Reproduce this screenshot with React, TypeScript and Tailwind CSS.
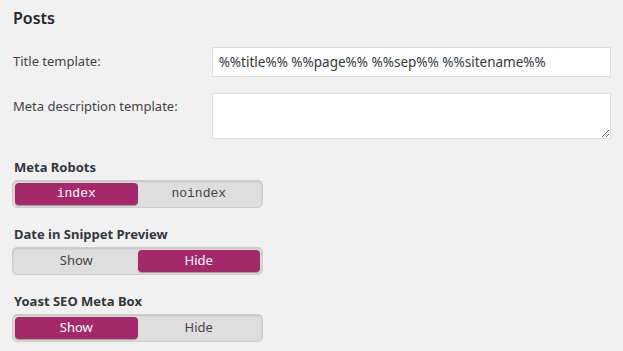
import { useState } from "react";

interface ToggleProps {
  options: string[];
  active: number;
  mono?: boolean;
}

const Toggle = ({ options, active, mono }: ToggleProps) => {
  const [sel, setSel] = useState(active);
  return (
    <div className="flex w-[251px] h-[28px] p-[2px] rounded-[5px] bg-[#dedede] border border-[#cdcdcd] shadow-[inset_0_1px_2px_rgba(0,0,0,0.12)]">
      {options.map((opt, i) => (
        <button
          key={opt}
          onClick={() => setSel(i)}
          className={
            "flex-1 h-full flex items-center justify-center rounded-[4px] text-[13px] " +
            (mono ? "font-['Liberation_Mono',monospace] " : "") +
            (sel === i
              ? "bg-[#a4286a] text-white shadow-[0_1px_1px_rgba(0,0,0,0.3)]"
              : "text-[#444]")
          }
        >
          {opt}
        </button>
      ))}
    </div>
  );
};

const App = () => {
  return (
    <div className="w-[623px] h-[351px] bg-[#f1f1f1] text-[#23282d] font-['Noto_Sans',sans-serif] overflow-hidden">
      <div className="px-[12px] pt-[6px]">
        {/* Heading */}
        <h2 className="text-[16px] font-semibold leading-[24px] pl-[1px]">Posts</h2>

        {/* Templates */}
        <div className="flex items-center mt-[17px]">
          <label className="w-[200px] text-[13px] text-[#444] pl-[1px]">Title template:</label>
          <input
            defaultValue="%%title%% %%page%% %%sep%% %%sitename%%"
            className="w-[400px] h-[30px] bg-white border border-[#ddd] px-[6px] text-[13.5px] text-[#32373c] outline-none"
          />
        </div>
        <div className="flex items-start mt-[16px]">
          <label className="w-[200px] text-[13px] text-[#444] pl-[1px] pt-[4px]">Meta description template:</label>
          <textarea className="w-[400px] h-[46px] bg-white border border-[#ddd] outline-none" />
        </div>

        {/* Toggles */}
        <div className="mt-[19px] flex flex-col gap-[17px]">
          <div>
            <div className="text-[13px] font-bold text-[#32373c] leading-[18px] pl-[2px] mb-[4px]">Meta Robots</div>
            <Toggle options={["index", "noindex"]} active={0} mono />
          </div>
          <div>
            <div className="text-[13px] font-bold text-[#32373c] leading-[18px] pl-[2px] mb-[4px]">Date in Snippet Preview</div>
            <Toggle options={["Show", "Hide"]} active={1} />
          </div>
          <div>
            <div className="text-[13px] font-bold text-[#32373c] leading-[18px] pl-[2px] mb-[4px]">Yoast SEO Meta Box</div>
            <Toggle options={["Show", "Hide"]} active={0} />
          </div>
        </div>
      </div>
    </div>
  );
};

export default App;
